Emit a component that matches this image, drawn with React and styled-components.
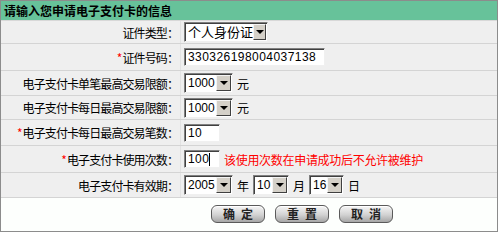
import styled, { createGlobalStyle } from "styled-components";

const Global = createGlobalStyle`
  body {
    margin: 0;
    background: #ffffff;
    font-family: "Noto Sans CJK SC", "Liberation Sans", sans-serif;
    font-size: 12px;
  }
`;

const Frame = styled.div`
  width: 496px;
  height: 230px;
  border: 1px solid #8c8c8c;
  background: #fdfffd;
  display: flex;
  flex-direction: column;
`;

const Title = styled.div`
  height: 19px;
  background: #67c29a;
  border-bottom: 1px solid #d8d8d8;
  display: flex;
  align-items: center;
  padding-left: 3px;
  font-weight: bold;
  font-size: 12px;
  color: #000;
`;

const Row = styled.div`
  display: grid;
  grid-template-columns: 180px 1fr;
  height: ${(p) => p.$h}px;
  background: #efefef;
  border-bottom: 1px solid #d4d4d4;
`;

const Label = styled.div`
  display: flex;
  align-items: center;
  justify-content: flex-end;
  padding-right: 2px;
  border-right: 1px solid #e2e2e2;
  color: #000;
  white-space: nowrap;
  letter-spacing: -0.9px;
`;

const Star = styled.span`
  color: #ff0000;
  margin-right: 1px;
`;

const Value = styled.div`
  display: flex;
  align-items: center;
  padding-left: 3px;
  gap: 4px;
  white-space: nowrap;
`;

const SelectBox = styled.div`
  width: ${(p) => p.$w}px;
  height: 20px;
  box-sizing: border-box;
  border: 1px solid;
  border-color: #808080 #f0f0f0 #f0f0f0 #808080;
  box-shadow: inset 1px 1px 0 #404040;
  background: #fff;
  display: flex;
  align-items: center;
  justify-content: space-between;
  padding: 1px 1px 1px 3px;
`;

const SelectText = styled.span`
  font-family: ${(p) => (p.$cjk ? '"Noto Sans CJK SC", sans-serif' : '"Liberation Sans", sans-serif')};
  font-size: ${(p) => (p.$cjk ? 13 : 12)}px;
  line-height: 16px;
`;

const Arrow = styled.span`
  width: 15px;
  height: 16px;
  box-sizing: border-box;
  background: #d4d0c8;
  border: 1px solid;
  border-color: #f4f4f4 #404040 #404040 #f4f4f4;
  display: flex;
  align-items: center;
  justify-content: center;
  &::after {
    content: "";
    border-left: 4px solid transparent;
    border-right: 4px solid transparent;
    border-top: 4px solid #000;
  }
`;

const TextInput = styled.div`
  width: ${(p) => p.$w}px;
  height: 18px;
  box-sizing: border-box;
  border: 1px solid;
  border-color: #808080 #f0f0f0 #f0f0f0 #808080;
  box-shadow: inset 1px 1px 0 #404040;
  background: #fff;
  display: flex;
  align-items: center;
  padding-left: 3px;
  font-family: "Liberation Sans", sans-serif;
  font-size: 12px;
  letter-spacing: 0.45px;
`;

const Caret = styled.span`
  display: inline-block;
  width: 1px;
  height: 13px;
  background: #000;
`;

const Unit = styled.span`
  font-size: 12px;
  color: #000;
`;

const Warn = styled.span`
  color: #ff0000;
  font-size: 12px;
  letter-spacing: -0.3px;
`;

const Footer = styled.div`
  flex: 1;
  display: flex;
  justify-content: center;
  align-items: flex-start;
  padding-top: 7px;
  padding-left: 106px;
  gap: 10px;
`;

const Button = styled.button`
  width: 54px;
  height: 18px;
  border: 1px solid #5a5a5a;
  border-radius: 6px;
  background: linear-gradient(#f6f6f6, #d2d2d2 55%, #a6a6a6);
  box-shadow: inset 0 1px 0 #ffffff;
  font-family: "Noto Sans CJK SC", sans-serif;
  font-size: 12px;
  font-weight: bold;
  letter-spacing: 6px;
  text-indent: 6px;
  color: #222;
  padding: 0;
  line-height: 16px;
`;

function Select({ w, text, cjk }) {
  return (
    <SelectBox $w={w}>
      <SelectText $cjk={cjk}>{text}</SelectText>
      <Arrow />
    </SelectBox>
  );
}

export default function App() {
  return (
    <>
      <Global />
      <Frame>
        <Title>请输入您申请电子支付卡的信息</Title>
        <Row $h={22}>
          <Label>证件类型：</Label>
          <Value>
            <Select w={84} text="个人身份证" cjk />
          </Value>
        </Row>
        <Row $h={26}>
          <Label>
            <Star>*</Star>证件号码：
          </Label>
          <Value>
            <TextInput $w={141}>330326198004037138</TextInput>
          </Value>
        </Row>
        <Row $h={24}>
          <Label>电子支付卡单笔最高交易限额：</Label>
          <Value>
            <Select w={49} text="1000" />
            <Unit>元</Unit>
          </Value>
        </Row>
        <Row $h={23}>
          <Label>电子支付卡每日最高交易限额：</Label>
          <Value>
            <Select w={49} text="1000" />
            <Unit>元</Unit>
          </Value>
        </Row>
        <Row $h={25}>
          <Label>
            <Star>*</Star>电子支付卡每日最高交易笔数：
          </Label>
          <Value>
            <TextInput $w={36}>10</TextInput>
          </Value>
        </Row>
        <Row $h={26}>
          <Label>
            <Star>*</Star>电子支付卡使用次数：
          </Label>
          <Value>
            <TextInput $w={36}>
              100
              <Caret />
            </TextInput>
            <Warn>该使用次数在申请成功后不允许被维护</Warn>
          </Value>
        </Row>
        <Row $h={24}>
          <Label>电子支付卡有效期：</Label>
          <Value>
            <Select w={49} text="2005" />
            <Unit>年</Unit>
            <Select w={36} text="10" />
            <Unit>月</Unit>
            <Select w={35} text="16" />
            <Unit>日</Unit>
          </Value>
        </Row>
        <Footer>
          <Button>确定</Button>
          <Button>重置</Button>
          <Button>取消</Button>
        </Footer>
      </Frame>
    </>
  );
}
